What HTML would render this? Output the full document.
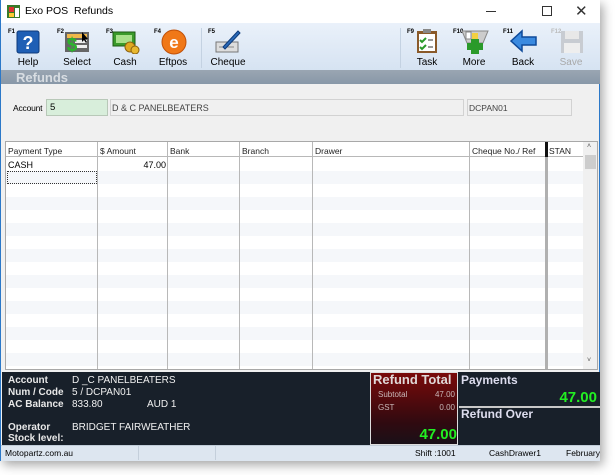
<!DOCTYPE html>
<html><head><meta charset="utf-8"><style>
*{margin:0;padding:0;box-sizing:border-box}
body{width:615px;height:475px;background:#fff;position:relative;overflow:hidden;font-family:"Liberation Sans",sans-serif;font-size:9px;color:#000}
.a{position:absolute}
#win{left:0;top:0;width:600px;height:461px;border:1px solid #2b78c8;border-top:none;background:#f0f0f0;box-shadow:3px 4px 10px rgba(0,0,0,.35)}
.tb{font-size:10px;text-align:center;width:50px}
.fk{font-size:6px;font-weight:bold}
.sep{width:1px;background:#c4d2e2;top:28px;height:40px}
.cell{border-right:1px solid #b8b8b8;top:0;height:100%}
.hd{font-size:8.5px;top:4px;color:#222}
.dk{font-weight:bold;color:#e8e8e8;font-size:10px}
.wt{color:#f0f0f0;font-size:10px}
</style></head><body>
<div id="win" class="a">
<div class="a" style="left:0;top:0;width:599px;height:23px;background:#fff"></div>
<svg class="a" style="left:6px;top:5px" width="14" height="14"><rect x="0" y="0" width="13" height="13" fill="#3a7a2a"/><rect x="2" y="2" width="5" height="5" fill="#d33"/><rect x="8" y="3" width="4" height="9" fill="#fff"/><rect x="2" y="8" width="5" height="4" fill="#ffcc33"/></svg>
<div class="a" style="left:24px;top:5px;font-size:10.5px">Exo POS&nbsp; Refunds</div>
<div class="a" style="left:485px;top:11px;width:10px;height:1px;background:#333"></div>
<div class="a" style="left:541px;top:6px;width:10px;height:10px;border:1px solid #333"></div>
<div class="a" style="left:574px;top:2px;font-size:15px;color:#333">✕</div>
<div class="a" style="left:0;top:23px;width:599px;height:47px;background:linear-gradient(#eaf1fa,#d6e3f2)"></div>
<div class="a fk" style="left:7px;top:29px">F1</div>
<svg class="a" style="left:15px;top:30px" width="24" height="24"><rect x="1" y="1" width="22" height="22" rx="2" fill="#1f5fb5" stroke="#0e3a7a"/><text x="12" y="19" font-size="18" font-weight="bold" fill="#fff" text-anchor="middle" font-family="Liberation Sans">?</text></svg>
<div class="a tb" style="left:2px;top:57px">Help</div>
<div class="a fk" style="left:56px;top:29px">F2</div>
<svg class="a" style="left:62px;top:30px" width="28" height="24"><rect x="2" y="2" width="24" height="20" fill="#666"/><rect x="4" y="4" width="20" height="4" fill="#f2b84b"/><rect x="12" y="10" width="12" height="3" fill="#eee"/><rect x="12" y="15" width="12" height="3" fill="#eee"/><text x="9" y="21" font-size="19" font-weight="bold" fill="#2bb52b" text-anchor="middle" font-family="Liberation Sans">$</text><path d="M19 2 L19 12 L21 10 L23 13 L24 12 L22 9 L25 9Z" fill="#000"/></svg>
<div class="a tb" style="left:51px;top:57px">Select</div>
<div class="a fk" style="left:105px;top:29px">F3</div>
<svg class="a" style="left:111px;top:30px" width="28" height="24"><rect x="1" y="2" width="22" height="14" fill="#3a9a2a" stroke="#1d5a14"/><rect x="4" y="5" width="16" height="8" fill="#a8e08a"/><circle cx="18" cy="17" r="5" fill="#e0a820" stroke="#8a6010"/><circle cx="23" cy="20" r="4" fill="#e8b830" stroke="#8a6010"/></svg>
<div class="a tb" style="left:99px;top:57px">Cash</div>
<div class="a fk" style="left:153px;top:29px">F4</div>
<svg class="a" style="left:160px;top:29px" width="26" height="26"><circle cx="13" cy="13" r="12" fill="#f07818" stroke="#c05008"/><text x="13" y="19" font-size="17" font-weight="bold" fill="#fff" text-anchor="middle" font-family="Liberation Sans">e</text></svg>
<div class="a tb" style="left:147px;top:57px">Eftpos</div>
<div class="a sep" style="left:200px"></div>
<div class="a fk" style="left:207px;top:29px">F5</div>
<svg class="a" style="left:213px;top:28px" width="28" height="26"><rect x="2" y="14" width="22" height="10" fill="#ddd" stroke="#777"/><line x1="5" y1="19" x2="20" y2="19" stroke="#888"/><path d="M9 19 L24 3 L26 5 L11 21Z" fill="#2a6ab8" stroke="#0e3a7a"/></svg>
<div class="a tb" style="left:202px;top:57px">Cheque</div>
<div class="a sep" style="left:399px"></div>
<div class="a fk" style="left:406px;top:29px">F9</div>
<svg class="a" style="left:414px;top:28px" width="24" height="26"><rect x="2" y="3" width="20" height="22" fill="#8a5a2a"/><rect x="4" y="6" width="16" height="17" fill="#fff"/><rect x="8" y="1" width="8" height="4" fill="#888"/><path d="M5 12 l2 2 l4 -4 M5 19 l2 2 l4 -4" stroke="#2a9a2a" stroke-width="2" fill="none"/><line x1="13" y1="12" x2="18" y2="12" stroke="#333"/><line x1="13" y1="19" x2="18" y2="19" stroke="#333"/></svg>
<div class="a tb" style="left:401px;top:57px">Task</div>
<div class="a fk" style="left:452px;top:29px">F10</div>
<svg class="a" style="left:460px;top:29px" width="28" height="26"><path d="M1 2 H27 L22 14 H6Z" fill="#ccc" stroke="#888"/><rect x="5" y="3" width="5" height="7" fill="#fff" stroke="#888"/><rect x="11" y="4" width="6" height="6" fill="#f2d040"/><rect x="10" y="10" width="8" height="15" fill="#2a9a2a"/><rect x="6" y="14" width="16" height="7" fill="#2a9a2a"/></svg>
<div class="a tb" style="left:448px;top:57px">More</div>
<div class="a fk" style="left:502px;top:29px">F11</div>
<svg class="a" style="left:509px;top:29px" width="28" height="24"><path d="M1 12 L12 2 V8 H26 V16 H12 V22Z" fill="#3a8ae0" stroke="#0e4a9a" stroke-width="1.5"/></svg>
<div class="a tb" style="left:497px;top:57px">Back</div>
<div class="a fk" style="left:550px;top:29px;color:#bbb">F12</div>
<svg class="a" style="left:559px;top:30px" width="24" height="24"><rect x="1" y="1" width="22" height="22" fill="#c8ccd2"/><rect x="5" y="1" width="14" height="8" fill="#e8e8e8"/><rect x="4" y="13" width="16" height="10" fill="#eee"/></svg>
<div class="a tb" style="left:545px;top:57px;color:#a8a8a8">Save</div>
<div class="a" style="left:0;top:70px;width:599px;height:14px;background:linear-gradient(#9aa6b2,#8898a8)"></div>
<div class="a" style="left:15px;top:70px;font-size:13px;font-weight:bold;color:#d8dde2">Refunds</div>
<div class="a" style="left:12px;top:103px;font-size:8.5px;letter-spacing:-0.2px">Account</div>
<div class="a" style="left:45px;top:99px;width:62px;height:17px;background:#d8eedb;border:1px solid #b8c8b8;font-size:9.5px;padding:2px 3px">5</div>
<div class="a" style="left:109px;top:99px;width:354px;height:17px;background:#f0f0f0;border:1px solid #d2d2d2;font-size:9px;padding:3px 1px;color:#444">D &amp; C PANELBEATERS</div>
<div class="a" style="left:466px;top:99px;width:105px;height:17px;background:#f0f0f0;border:1px solid #d2d2d2;font-size:8.5px;padding:3px 1px;color:#444">DCPAN01</div>
<div class="a" style="left:4px;top:141px;width:593px;height:229px;background:#fff;border:1px solid #a8a8a8;overflow:hidden">
 <div class="a" style="left:0;top:16px;width:577px;height:213px;background:repeating-linear-gradient(#fff 0 13px,#f5f7fa 13px 26px)"></div>
 <div class="a" style="left:0;top:0;width:577px;height:15px;border-bottom:1px solid #b8b8b8;background:#fff"></div>
 <div class="a cell" style="left:91px"></div><div class="a cell" style="left:161px"></div><div class="a cell" style="left:233px"></div><div class="a cell" style="left:306px"></div><div class="a cell" style="left:463px"></div>
 <div class="a" style="left:539px;top:0;width:3px;height:100%;background:#b0b0b0"></div>
 <div class="a" style="left:539px;top:0;width:3px;height:15px;background:#111"></div>
 <div class="a hd" style="left:2px">Payment Type</div><div class="a hd" style="left:94px">$ Amount</div><div class="a hd" style="left:164px">Bank</div><div class="a hd" style="left:236px">Branch</div><div class="a hd" style="left:309px">Drawer</div><div class="a hd" style="left:466px">Cheque No./ Ref</div><div class="a hd" style="left:543px">STAN</div>
 <div class="a" style="left:2px;top:18px;font-size:9px">CASH</div>
 <div class="a" style="left:94px;top:18px;width:66px;text-align:right;font-size:9px">47.00</div>
 <div class="a" style="left:1px;top:29px;width:90px;height:13px;border:1px dotted #333"></div>
 <div class="a" style="left:577px;top:0;width:15px;height:229px;background:#f0f0f0"></div>
 <div class="a" style="left:579px;top:13px;width:11px;height:14px;background:#cdcdcd"></div>
 <div class="a" style="left:581px;top:1px;font-size:7px;color:#555">˄</div>
 <div class="a" style="left:581px;top:215px;font-size:7px;color:#555">˅</div>
</div>
<div class="a" style="left:1px;top:372px;width:598px;height:73px;background:#18202a"></div>
<div class="a dk" style="left:7px;top:375px">Account</div><div class="a wt" style="left:71px;top:375px">D _C PANELBEATERS</div>
<div class="a dk" style="left:7px;top:387px">Num / Code</div><div class="a wt" style="left:71px;top:387px">5 / DCPAN01</div>
<div class="a dk" style="left:7px;top:399px">AC Balance</div><div class="a wt" style="left:71px;top:399px">833.80</div><div class="a wt" style="left:146px;top:399px">AUD 1</div>
<div class="a dk" style="left:7px;top:422px">Operator</div><div class="a wt" style="left:71px;top:422px">BRIDGET FAIRWEATHER</div>
<div class="a dk" style="left:7px;top:433px">Stock level:</div>
<div class="a" style="left:369px;top:372px;width:88px;height:73px;background:linear-gradient(#7a0a0a,#300a10 70%,#1a1018);border:1px solid #ddd"></div>
<div class="a" style="left:372px;top:372px;font-size:13px;font-weight:bold;color:#e0d8d8">Refund Total</div>
<div class="a" style="left:377px;top:390px;font-size:8px;color:#c8b8b8">Subtotal</div><div class="a" style="left:420px;top:390px;width:34px;text-align:right;font-size:8px;color:#c8b8b8">47.00</div>
<div class="a" style="left:377px;top:403px;font-size:8px;color:#c8b8b8">GST</div><div class="a" style="left:420px;top:403px;width:34px;text-align:right;font-size:8px;color:#c8b8b8">0.00</div>
<div class="a" style="left:400px;top:426px;width:56px;text-align:right;font-size:15px;font-weight:bold;color:#22ee22">47.00</div>
<div class="a" style="left:458px;top:406px;width:141px;height:2px;background:#c8c8c8"></div>
<div class="a" style="left:460px;top:373px;font-size:12px;font-weight:bold;color:#dde">Payments</div>
<div class="a" style="left:520px;top:389px;width:76px;text-align:right;font-size:15px;font-weight:bold;color:#22ee22">47.00</div>
<div class="a" style="left:460px;top:407px;font-size:12px;font-weight:bold;color:#dde">Refund Over</div>
<div class="a" style="left:0;top:445px;width:599px;height:16px;background:#dde6f0;border-top:1px solid #c0ccd8"></div>
<div class="a" style="left:4px;top:448px;font-size:8.5px">Motopartz.com.au</div>
<div class="a" style="left:137px;top:446px;width:1px;height:14px;background:#c4cfdb"></div>
<div class="a" style="left:214px;top:446px;width:1px;height:14px;background:#c4cfdb"></div>
<div class="a" style="left:414px;top:448px;font-size:8.5px">Shift :1001</div>
<div class="a" style="left:488px;top:448px;font-size:8.5px">CashDrawer1</div>
<div class="a" style="left:565px;top:448px;font-size:8.5px">February</div>
</div>
</body></html>
